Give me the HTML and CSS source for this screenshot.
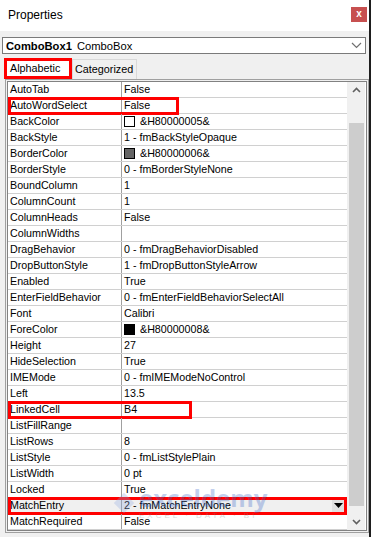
FILE: index.html
```html
<!DOCTYPE html>
<html lang="en">
<head>
    <meta charset="UTF-8">
    <meta name="viewport" content="width=device-width, initial-scale=1.0">
    <title>Properties</title>
    <link rel="stylesheet" href="styles.css">
</head>
<body>

<div class="window">
    <div class="titlebar">
        <span class="title">Properties</span>
        <span class="close">x</span>
    </div>

    <div class="combo">
        <span class="combo-name">ComboBox1</span>
        <span class="combo-type">ComboBox</span>
        <svg class="combo-arrow" width="11" height="7" viewBox="0 0 11 7">
            <path d="M1 1 L5.5 5.5 L10 1" fill="none" stroke="#707070" stroke-width="1.2"/>
        </svg>
    </div>

    <div class="tabs">
        <div class="tab active">Alphabetic</div>
        <div class="tab">Categorized</div>
    </div>

    <div class="grid-frame">
        <div class="grid-inner">
            <div class="grid">
                <div class="row"><div class="name">AutoTab</div><div class="value">False</div></div>
                <div class="row"><div class="name">AutoWordSelect</div><div class="value">False</div><span class="mark mark-short"></span></div>
                <div class="row"><div class="name">BackColor</div><div class="value"><span class="swatch white"></span>&amp;H80000005&amp;</div></div>
                <div class="row"><div class="name">BackStyle</div><div class="value">1 - fmBackStyleOpaque</div></div>
                <div class="row"><div class="name">BorderColor</div><div class="value"><span class="swatch gray"></span>&amp;H80000006&amp;</div></div>
                <div class="row"><div class="name">BorderStyle</div><div class="value">0 - fmBorderStyleNone</div></div>
                <div class="row"><div class="name">BoundColumn</div><div class="value">1</div></div>
                <div class="row"><div class="name">ColumnCount</div><div class="value">1</div></div>
                <div class="row"><div class="name">ColumnHeads</div><div class="value">False</div></div>
                <div class="row"><div class="name">ColumnWidths</div><div class="value"></div></div>
                <div class="row"><div class="name">DragBehavior</div><div class="value">0 - fmDragBehaviorDisabled</div></div>
                <div class="row"><div class="name">DropButtonStyle</div><div class="value">1 - fmDropButtonStyleArrow</div></div>
                <div class="row"><div class="name">Enabled</div><div class="value">True</div></div>
                <div class="row"><div class="name">EnterFieldBehavior</div><div class="value">0 - fmEnterFieldBehaviorSelectAll</div></div>
                <div class="row"><div class="name">Font</div><div class="value">Calibri</div></div>
                <div class="row"><div class="name">ForeColor</div><div class="value"><span class="swatch black"></span>&amp;H80000008&amp;</div></div>
                <div class="row"><div class="name">Height</div><div class="value">27</div></div>
                <div class="row"><div class="name">HideSelection</div><div class="value">True</div></div>
                <div class="row"><div class="name">IMEMode</div><div class="value">0 - fmIMEModeNoControl</div></div>
                <div class="row"><div class="name">Left</div><div class="value">13.5</div></div>
                <div class="row"><div class="name">LinkedCell</div><div class="value">B4</div><span class="mark mark-mid"></span></div>
                <div class="row"><div class="name">ListFillRange</div><div class="value"></div></div>
                <div class="row"><div class="name">ListRows</div><div class="value">8</div></div>
                <div class="row"><div class="name">ListStyle</div><div class="value">0 - fmListStylePlain</div></div>
                <div class="row"><div class="name">ListWidth</div><div class="value">0 pt</div></div>
                <div class="row"><div class="name">Locked</div><div class="value">True</div></div>
                <div class="row selected"><div class="name">MatchEntry</div><div class="value">2 - fmMatchEntryNone<span class="drop"><svg width="9" height="5" viewBox="0 0 9 5"><path d="M0 0 H9 L4.5 5 Z" fill="#000"/></svg></span></div><span class="mark mark-wide"></span></div>
                <div class="row"><div class="name">MatchRequired</div><div class="value">False</div></div>

                <div class="watermark">
                    <div class="wm-logo"></div>
                    <div class="wm-text">
                        <span class="wm-name">exceldemy</span>
                        <span class="wm-sub">EXCEL · DATA · BI</span>
                    </div>
                </div>
            </div>

            <div class="scrollbar">
                <svg class="sb-arrow" width="9" height="6" viewBox="0 0 9 6"><path d="M1 5 L4.5 1.5 L8 5" fill="none" stroke="#606060" stroke-width="1.6"/></svg>
                <div class="sb-track"><div class="sb-thumb"></div></div>
                <svg class="sb-arrow" width="9" height="6" viewBox="0 0 9 6"><path d="M1 1 L4.5 4.5 L8 1" fill="none" stroke="#606060" stroke-width="1.6"/></svg>
            </div>
        </div>
    </div>
</div>

</body>
</html>
```

FILE: styles.css
```css
body {
    margin: 0;
    background-color: #f0f0f0;
    font-family: "Liberation Sans", Arial, sans-serif;
    font-size: 10.7px;
    color: #000000;
}

.window {
    width: 369px;
    height: 537px;
    background-color: #f0f0f0;
    border-right: 2px solid #1e1e1e;
    overflow: hidden;
}

.titlebar {
    height: 31px;
    background-color: #ffffff;
    display: flex;
    justify-content: space-between;
    align-items: flex-start;
}

.title {
    font-size: 12px;
    margin: 8px 0 0 8px;
    color: #000000;
}

.close {
    width: 16px;
    height: 15px;
    margin: 7px 2px 0 0;
    background-color: #c75050;
    color: #ffffff;
    font-weight: bold;
    font-size: 10px;
    line-height: 14px;
    text-align: center;
}

.combo {
    margin: 6px 3px 0 2px;
    height: 15px;
    background-color: #ffffff;
    border: 1px solid #7a7a7a;
    display: flex;
    align-items: center;
    padding-left: 3px;
    font-size: 11.2px;
}

.combo-name {
    font-weight: bold;
    margin-right: 5px;
}

.combo-arrow {
    margin-left: auto;
    margin-right: 3px;
}

.tabs {
    display: flex;
    align-items: flex-end;
    margin: 4px 0 0 4px;
    height: 21px;
}

.tab {
    height: 19px;
    line-height: 18px;
    padding: 0 3px 0 2px;
    border: 1px solid #d9d9d9;
    border-bottom: none;
    font-size: 10.8px;
}

.tab.active {
    height: 15px;
    line-height: 15px;
    padding: 0 6px 0 3px;
    width: 53px;
    background-color: #ffffff;
    border: 3px solid #ff0000;
}

.grid-frame {
    margin-left: 5px;
    width: 360px;
    border: 1px solid #a0a0a0;
    padding: 1px;
    background-color: #f0f0f0;
}

.grid-inner {
    display: flex;
    border: 1px solid #828282;
    background-color: #ffffff;
}

.grid {
    position: relative;
    width: 339px;
}

.row {
    position: relative;
    display: flex;
    height: 15px;
    border-bottom: 1px solid #d0d0d0;
    line-height: 15px;
    white-space: nowrap;
}

.name {
    width: 111px;
    padding-left: 2px;
    border-right: 1px solid #a0a0a0;
}

.value {
    flex: 1;
    display: flex;
    align-items: center;
    padding-left: 2px;
}

.row.selected {
    background-color: #f0f0f0;
}

.swatch {
    width: 9px;
    height: 9px;
    border: 1px solid #000000;
    margin-right: 5px;
}

.swatch.white { background-color: #ffffff; }
.swatch.gray { background-color: #646464; }
.swatch.black { background-color: #000000; }

.drop {
    margin-left: auto;
    margin-right: 2px;
    width: 13px;
    height: 13px;
    background-color: #e1e1e1;
    display: flex;
    align-items: center;
    justify-content: center;
}

.mark {
    position: absolute;
    left: 0;
    top: -1px;
    height: 12px;
    border: 3px solid #ff0000;
}

.mark-short { width: 165px; }
.mark-mid { width: 178px; }
.mark-wide { width: 333px; }

.watermark {
    position: absolute;
    left: 107px;
    top: 404px;
    display: flex;
    align-items: center;
    opacity: 0.3;
    pointer-events: none;
}

.wm-logo {
    width: 18px;
    height: 18px;
    background-color: #8fa8e0;
    transform: rotate(45deg) scale(0.8);
    margin-right: 6px;
}

.wm-text {
    display: flex;
    flex-direction: column;
    line-height: 1;
}

.wm-name {
    font-family: "Open Sans", sans-serif;
    font-weight: bold;
    font-size: 24px;
    color: #3a66c8;
}

.wm-sub {
    font-size: 8px;
    letter-spacing: 3px;
    color: #808080;
    margin-top: 2px;
}

.scrollbar {
    width: 17px;
    display: flex;
    flex-direction: column;
    align-items: center;
    background-color: #f0f0f0;
    border-left: 1px solid #f0f0f0;
}

.sb-arrow {
    margin: 5px 0;
}

.sb-track {
    flex: 1;
    width: 100%;
    padding: 25px 1px 8px 1px;
    box-sizing: border-box;
}

.sb-thumb {
    height: 100%;
    background-color: #cdcdcd;
}
```
